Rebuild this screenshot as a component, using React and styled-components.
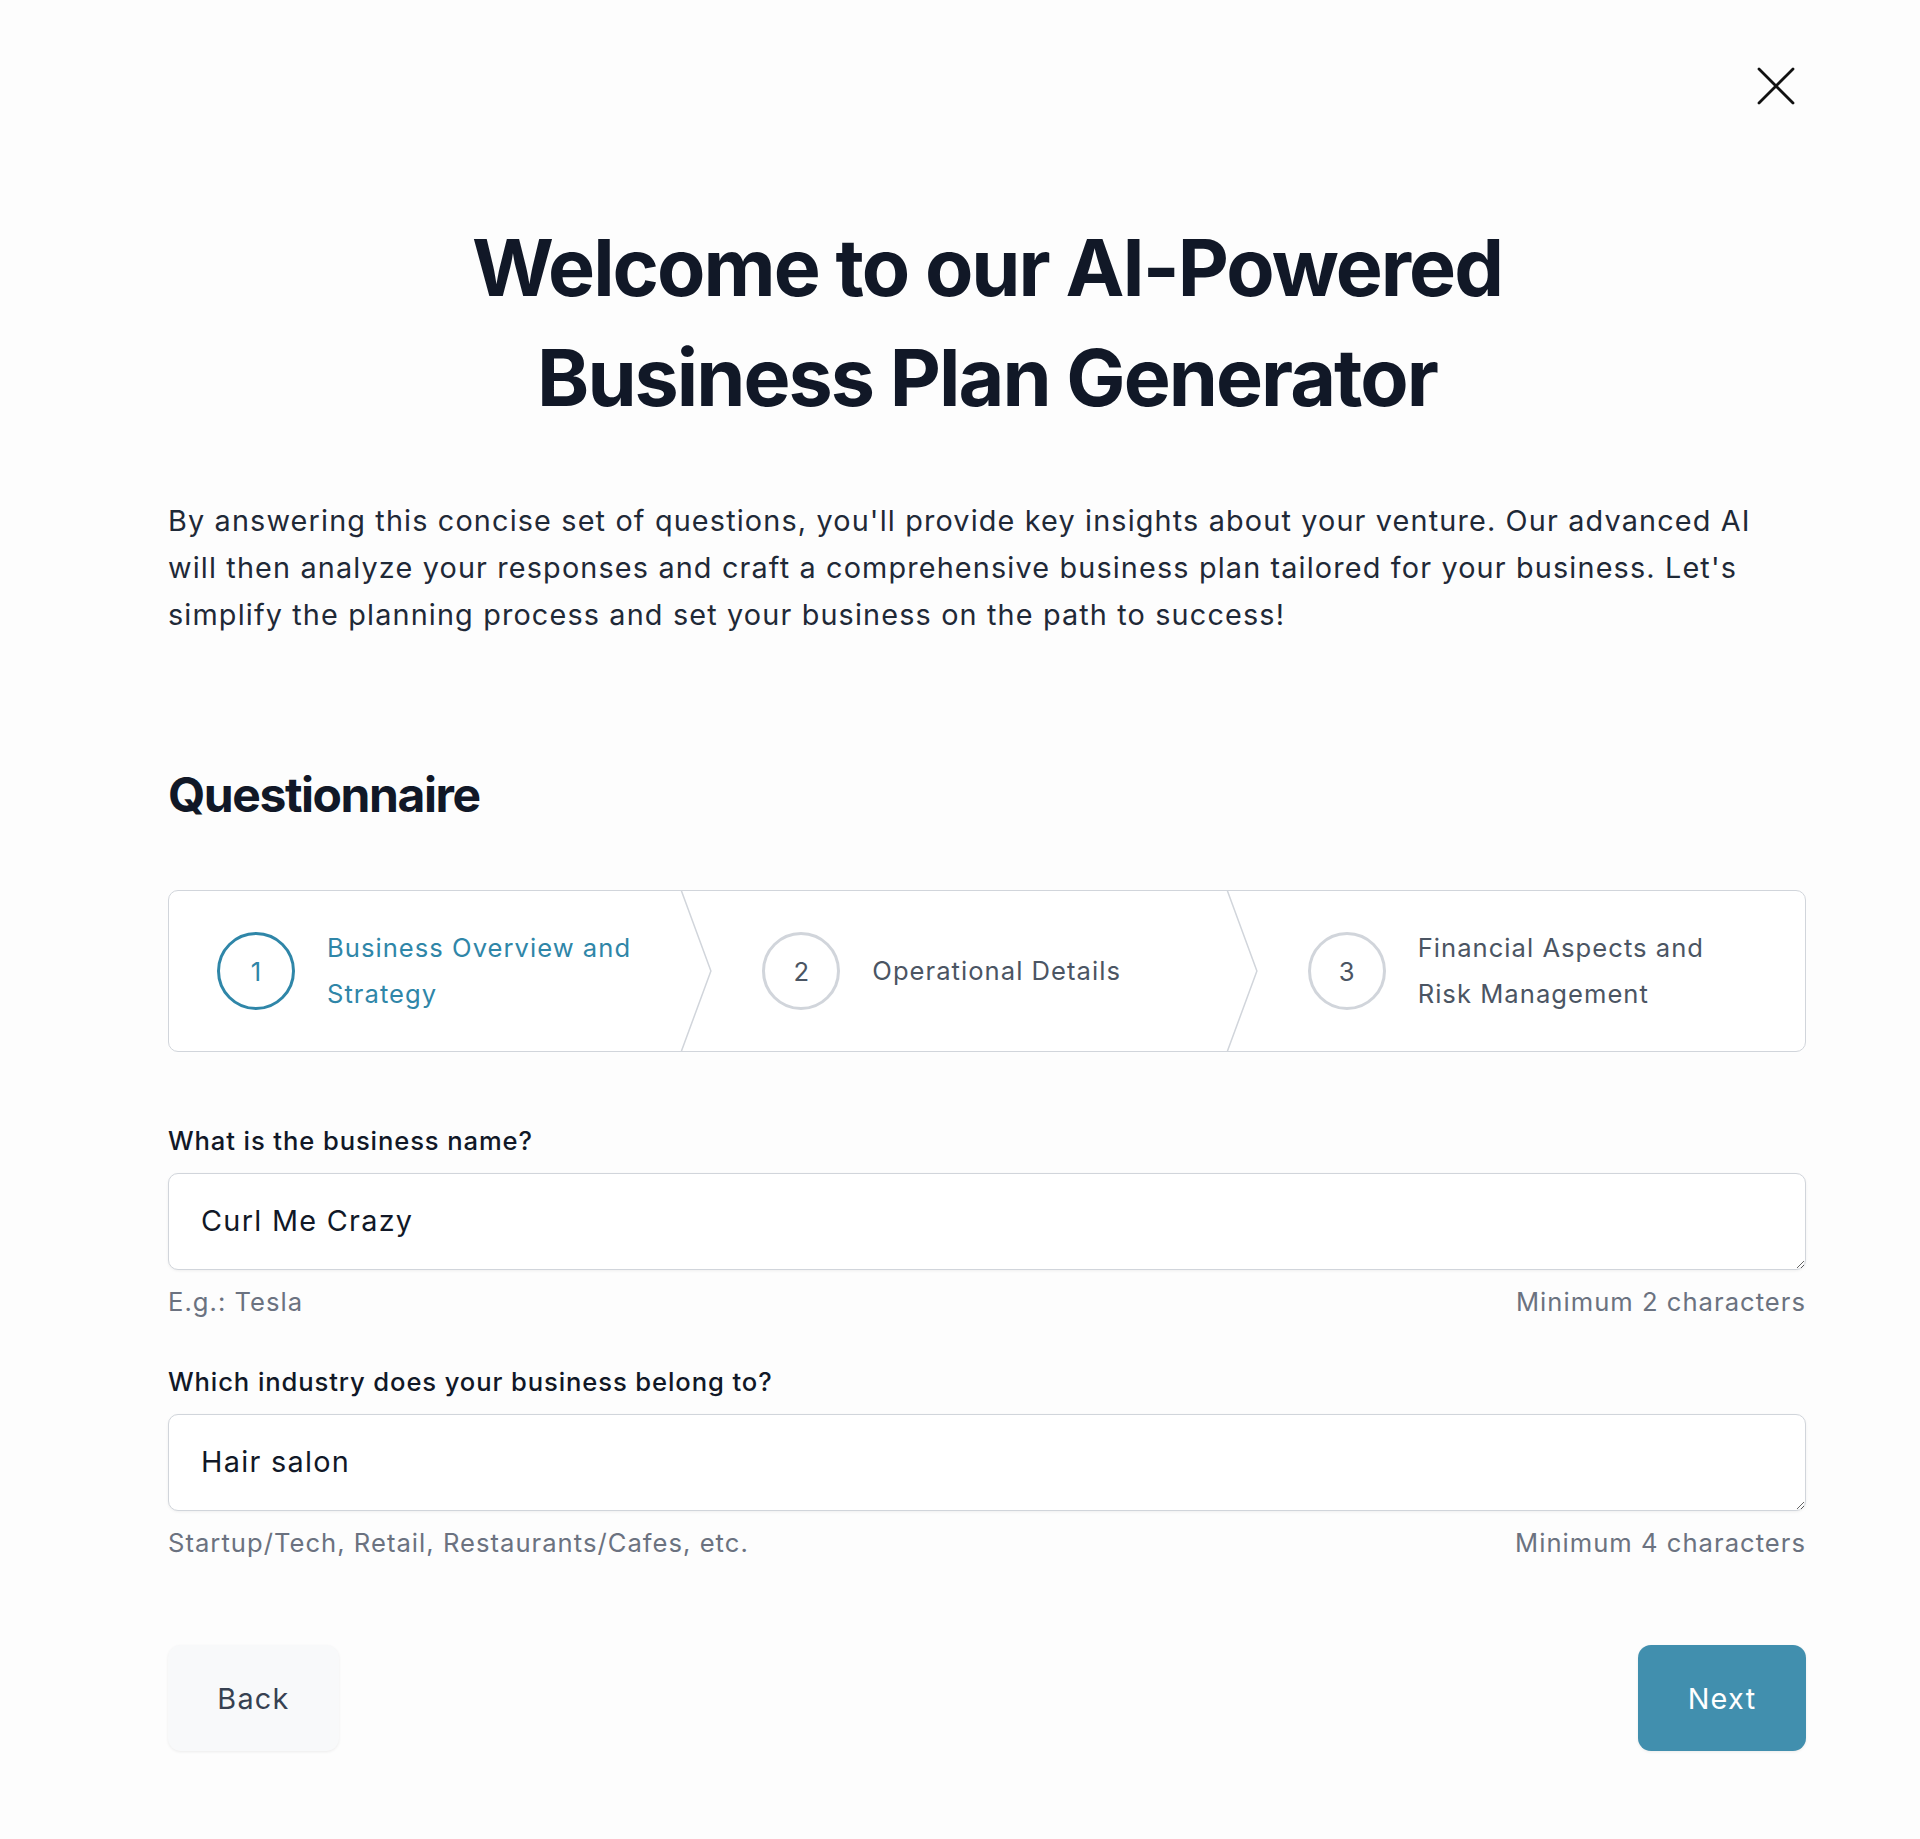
import React from "react";
import styled, { createGlobalStyle } from "styled-components";

const Global = createGlobalStyle`
  html, body { margin: 0; padding: 0; background: #fdfdfd; }
  body { font-family: Inter, "Noto Sans", sans-serif; color: #111827; -webkit-font-smoothing: antialiased; }
  * { box-sizing: border-box; }
`;

const Page = styled.div`
  min-height: 1839px;
  padding: 0 114px 0 168px;
  display: flex;
  flex-direction: column;
`;

const TopBar = styled.div`
  display: flex;
  justify-content: flex-end;
  padding-top: 64px;
`;

const CloseButton = styled.button`
  width: 44px;
  height: 44px;
  margin-right: 8px;
  border: 0;
  background: transparent;
  padding: 0;
  display: flex;
  align-items: center;
  justify-content: center;
  color: #111111;
  cursor: pointer;
`;

const Title = styled.h1`
  margin: 104px 0 0;
  text-align: center;
  font-size: 79px;
  line-height: 110px;
  font-weight: 700;
  letter-spacing: -0.025em;
  color: #111827;
`;

const Intro = styled.p`
  margin: 66px 0 0;
  font-size: 28.8px;
  line-height: 46.8px;
  letter-spacing: 0.04em;
  color: #1f2937;
`;

const SectionTitle = styled.h2`
  margin: 128px 0 0;
  font-size: 48px;
  line-height: 58px;
  font-weight: 700;
  letter-spacing: -0.03em;
  color: #111827;
`;

const Steps = styled.ol`
  list-style: none;
  margin: 66px 0 0;
  padding: 0;
  display: grid;
  grid-template-columns: repeat(3, 1fr);
  height: 162px;
  border: 1.5px solid #d1d5db;
  border-radius: 10px;
  background: #ffffff;
`;

const Step = styled.li`
  position: relative;
  display: flex;
  align-items: center;
  gap: 32px;
  padding: 0 64px 0 48px;
`;

const Separator = styled.svg`
  position: absolute;
  top: 0;
  right: 0;
  height: 100%;
  width: 34px;
  color: #d1d5db;
`;

const Circle = styled.span`
  flex: none;
  width: 78px;
  height: 78px;
  border-radius: 50%;
  border: 3px solid ${p => (p.$active ? "#2f86a8" : "#d1d5db")};
  display: flex;
  align-items: center;
  justify-content: center;
  font-size: 25.6px;
  color: ${p => (p.$active ? "#2f86a8" : "#4b5563")};
`;

const StepLabel = styled.span`
  font-size: 25.6px;
  line-height: 46px;
  font-weight: 400;
  letter-spacing: 0.04em;
  color: ${p => (p.$active ? "#2f86a8" : "#4b5563")};
`;

const Field = styled.div`
  display: flex;
  flex-direction: column;
  margin-top: ${p => (p.$first ? "70px" : "42px")};
`;

const Label = styled.label`
  font-size: 25.6px;
  line-height: 38px;
  font-weight: 500;
  letter-spacing: 0.035em;
  color: #111827;
`;

const TextArea = styled.textarea`
  margin-top: 13px;
  width: 100%;
  height: 97px;
  padding: 24px 32px;
  font-family: inherit;
  font-size: 28.8px;
  line-height: 46px;
  letter-spacing: 0.045em;
  color: #111827;
  background: #ffffff;
  border: 1.5px solid #d1d5db;
  border-radius: 10px;
  box-shadow: 0 1px 3px rgba(0, 0, 0, 0.06);
  resize: vertical;
  outline: none;
`;

const Hints = styled.div`
  margin-top: 13px;
  display: flex;
  justify-content: space-between;
  font-size: 25.6px;
  line-height: 38px;
  letter-spacing: 0.04em;
  color: #6b7280;
`;

const Actions = styled.div`
  margin-top: 83px;
  display: flex;
  justify-content: space-between;
`;

const Button = styled.button`
  height: 106px;
  min-width: ${p => (p.$primary ? "168px" : "171px")};
  padding: 0 48px;
  border: 0;
  border-radius: 13px;
  font-family: inherit;
  font-size: 28.8px;
  font-weight: 400;
  letter-spacing: 0.045em;
  color: ${p => (p.$primary ? "#ffffff" : "#374151")};
  background: ${p => (p.$primary ? "#418fae" : "#f8f9fa")};
  box-shadow: 0 1px 3px rgba(0, 0, 0, 0.07);
  cursor: pointer;
`;

const steps = [
  { n: 1, label: "Business Overview and Strategy" },
  { n: 2, label: "Operational Details" },
  { n: 3, label: "Financial Aspects and Risk Management" },
];

export default function App() {
  return (
    <>
      <Global />
      <Page>
        <TopBar>
          <CloseButton aria-label="Close">
            <svg width="40" height="40" viewBox="0 0 40 40" fill="none" stroke="currentColor" strokeWidth="2.8" strokeLinecap="round">
              <path d="M3 3L37 37M37 3L3 37" />
            </svg>
          </CloseButton>
        </TopBar>
        <Title>
          Welcome to our AI-Powered
          <br />
          Business Plan Generator
        </Title>
        <Intro>
          By answering this concise set of questions, you'll provide key insights about your venture. Our advanced AI will then analyze your responses and craft a comprehensive business plan tailored for your business. Let's simplify the planning process and set your business on the path to success!
        </Intro>
        <SectionTitle>Questionnaire</SectionTitle>
        <Steps>
          {steps.map((s, i) => (
            <Step key={s.n}>
              <Circle $active={i === 0}>{s.n}</Circle>
              <StepLabel $active={i === 0}>{s.label}</StepLabel>
              {i < steps.length - 1 && (
                <Separator viewBox="0 0 22 80" preserveAspectRatio="none" fill="none">
                  <path d="M0 -2L20 40L0 82" stroke="currentColor" vectorEffect="non-scaling-stroke" strokeWidth="1.5" strokeLinejoin="round" />
                </Separator>
              )}
            </Step>
          ))}
        </Steps>
        <Field $first>
          <Label>What is the business name?</Label>
          <TextArea rows={1} defaultValue="Curl Me Crazy" />
          <Hints>
            <span>E.g.: Tesla</span>
            <span>Minimum 2 characters</span>
          </Hints>
        </Field>
        <Field>
          <Label>Which industry does your business belong to?</Label>
          <TextArea rows={1} defaultValue="Hair salon" />
          <Hints>
            <span>Startup/Tech, Retail, Restaurants/Cafes, etc.</span>
            <span>Minimum 4 characters</span>
          </Hints>
        </Field>
        <Actions>
          <Button>Back</Button>
          <Button $primary>Next</Button>
        </Actions>
      </Page>
    </>
  );
}
